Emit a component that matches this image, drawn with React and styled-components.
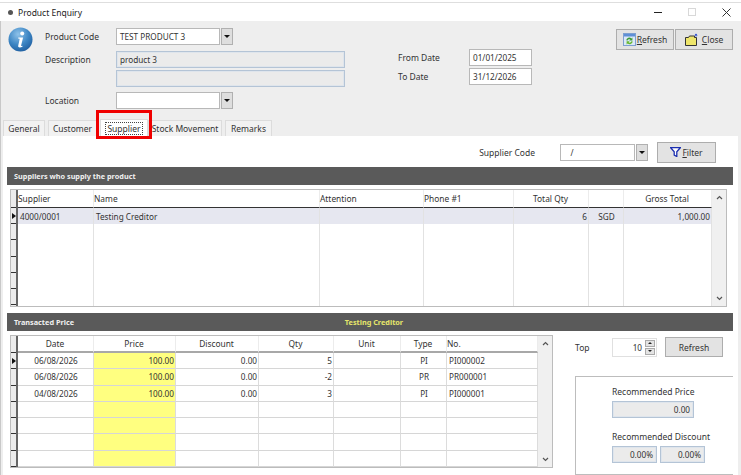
import React from 'react'
import styled, { createGlobalStyle } from 'styled-components'

const GlobalStyle = createGlobalStyle`
  html, body {
    margin: 0;
    padding: 0;
    background: #fff;
  }
  body {
    font-family: 'Noto Sans', 'Open Sans', sans-serif;
    font-size: 8.5px;
    color: #333;
    overflow: hidden;
  }
`

const Window = styled.div`
  width: 741px;
  height: 475px;
  overflow: hidden;
  box-sizing: border-box;
  padding-top: 2px;
  display: flex;
  flex-direction: column;
  background: #fff;
`

const TitleBar = styled.div`
  height: 19px;
  flex: none;
  border-top: 1px solid #dedede;
  box-sizing: border-box;
  display: flex;
  align-items: center;
  padding: 0 10px 0 8px;
  font-size: 8.5px;
  color: #222;
`

const TitleDot = styled.span`
  width: 5px;
  height: 5px;
  border-radius: 50%;
  background: #555;
  margin-right: 5px;
`

const TitleText = styled.span`
  flex: 1;
`

const WinControls = styled.div`
  display: flex;
  align-items: center;
  gap: 25px;
`

const Body = styled.div`
  flex: 1;
  background: #eeeeee;
  border-left: 1px solid #c8c8c8;
  display: flex;
  flex-direction: column;
  min-height: 0;
`

const Header = styled.div`
  height: 98px;
  flex: none;
  display: flex;
`

const InfoBox = styled.div`
  width: 44px;
  flex: none;
  padding: 6px 0 0 7px;
  box-sizing: border-box;
`

const Form = styled.div`
  width: 352px;
  flex: none;
  padding-top: 7px;
  display: flex;
  flex-direction: column;
`

const FormRow = styled.div`
  display: grid;
  grid-template-columns: 71px 1fr;
  align-items: center;
  margin-bottom: ${p => p.$gap || 0}px;
`

const Label = styled.span`
  font-size: 8.5px;
  color: #333;
  white-space: nowrap;
`

const Combo = styled.div`
  display: flex;
  align-items: center;
  gap: 1px;
`

const TextBox = styled.div`
  width: ${p => p.$w}px;
  height: ${p => p.$h || 17}px;
  box-sizing: border-box;
  background: ${p => p.$bg || '#fff'};
  border: 1px solid ${p => p.$line || '#b8b8b8'};
  display: flex;
  align-items: center;
  justify-content: ${p => (p.$right ? 'flex-end' : 'flex-start')};
  padding: 0 3px;
  font-size: 8.2px;
  color: #333;
`

const ReadOnly = styled(TextBox)`
  background: #ebebeb;
  border: 1px solid #b4c4d6;
  box-shadow: inset 0 0 0 1px #dfe5ec;
`

const DropButton = styled.span`
  width: 12px;
  height: 17px;
  box-sizing: border-box;
  background: #dedede;
  border: 1px solid #b0b0b0;
  display: flex;
  align-items: center;
  justify-content: center;
  &::after {
    content: '';
    border-left: 3.5px solid transparent;
    border-right: 3.5px solid transparent;
    border-top: 3.5px solid #111;
  }
`

const DateCol = styled.div`
  width: 219px;
  flex: none;
  padding: 28px 0 0 1px;
  box-sizing: border-box;
  display: flex;
  flex-direction: column;
  gap: 2px;
`

const DateRow = styled.div`
  display: grid;
  grid-template-columns: 71px 63px;
  align-items: center;
`

const ActionCol = styled.div`
  display: flex;
  gap: 1px;
  padding-top: 8px;
`

const Button = styled.button`
  width: ${p => p.$w}px;
  height: ${p => p.$h || 21}px;
  box-sizing: border-box;
  background: #e3e3e3;
  border: 1px solid #adadad;
  font-family: inherit;
  font-size: 8.5px;
  color: #333;
  padding: 0;
  display: flex;
  align-items: center;
  justify-content: center;
  gap: 1px;
  u {
    text-decoration: underline;
  }
`

const TabStrip = styled.div`
  height: 17px;
  flex: none;
  display: flex;
  align-items: flex-end;
  padding-left: 2px;
`

const Tab = styled.div`
  position: relative;
  width: ${p => p.$w}px;
  height: ${p => (p.$active ? 17 : 16)}px;
  box-sizing: border-box;
  background: ${p => (p.$active ? '#fff' : '#f2f2f2')};
  border: 1px solid #dcdcdc;
  border-bottom: none;
  margin-left: ${p => p.$ml || 0}px;
  font-size: 8.5px;
  color: #333;
  display: flex;
  align-items: center;
  justify-content: center;
`

const FocusText = styled.span`
  border: 1px dotted #444;
  padding: 0 1px;
  line-height: 11px;
`

const Highlight = styled.span`
  position: absolute;
  z-index: 2;
  left: -5px;
  right: -5px;
  top: -10px;
  bottom: -3px;
  border: 3px solid #f00000;
  pointer-events: none;
`

const Page = styled.div`
  flex: 1;
  min-height: 0;
  background: #fff;
  margin: 0 3px 0 2px;
  padding: 0 5px 0 4px;
  display: flex;
  flex-direction: column;
`

const FilterRow = styled.div`
  height: 31px;
  flex: none;
  display: flex;
  align-items: center;
  justify-content: flex-end;
  padding: 1px 17px 0 0;
  box-sizing: border-box;
`

const FilterLabel = styled(Label)`
  margin-right: 25px;
`

const FilterCombo = styled(Combo)`
  margin-right: 9px;
`

const SectionBar = styled.div`
  height: 18px;
  flex: none;
  background: #5a5a5a;
  color: #f0f0f0;
  font-size: 7.3px;
  font-weight: 700;
  display: grid;
  grid-template-columns: 1fr auto 1fr;
  align-items: center;
  padding: 0 7px;
`

const SectionNote = styled.span`
  color: #e6e66a;
  margin-left: 8px;
`

const Grid = styled.div`
  position: relative;
  box-sizing: border-box;
  border: 1px solid #bcbcbc;
  background: #fff;
  display: flex;
`

const SupplierGrid = styled(Grid)`
  height: 118px;
  flex: none;
  margin: 4px 6px 6px 3px;
`

const PriceGrid = styled(Grid)`
  width: 543px;
  height: 133px;
`

const Indicators = styled.div`
  width: 7px;
  flex: none;
  box-sizing: border-box;
  background: #ececec;
  border-right: 2px solid #666;
  display: flex;
  flex-direction: column;
`

const IndicatorCell = styled.div`
  height: ${p => p.$h}px;
  flex: none;
  box-sizing: border-box;
  border-bottom: 1px solid #333;
  display: flex;
  align-items: center;
  justify-content: flex-end;
`

const Pointer = styled.span`
  border-top: 3px solid transparent;
  border-bottom: 3px solid transparent;
  border-left: 4px solid #111;
`

const Table = styled.div`
  flex: 1;
  min-width: 0;
  display: grid;
  grid-template-columns: ${p => p.$cols};
  grid-template-rows: ${p => p.$rows};
  height: 100%;
`

const HeadCell = styled.div`
  box-sizing: border-box;
  display: flex;
  align-items: center;
  justify-content: ${p => p.$align || 'flex-start'};
  font-size: 8.4px;
  color: #333;
  border-right: 1px solid #ececec;
  border-bottom: ${p => p.$heavy || '1px solid #333'};
  padding: 0 1px 0 0;
`

const Cell = styled.div`
  box-sizing: border-box;
  display: flex;
  align-items: center;
  justify-content: ${p => p.$align || 'flex-start'};
  font-size: 8.2px;
  color: #333;
  white-space: nowrap;
  padding: 0 1px 0 2px;
  background: ${p => p.$bg || 'transparent'};
  border-right: 1px solid ${p => p.$line || '#e2e2e2'};
  border-bottom: ${p => (p.$rule ? `1px solid ${p.$rule}` : 'none')};
`

const ScrollBar = styled.div`
  width: 14px;
  flex: none;
  background: #f0f0f0;
  display: flex;
  flex-direction: column;
  justify-content: space-between;
  align-items: center;
  padding: 5px 0;
  box-sizing: border-box;
`

const Lower = styled.div`
  flex: 1;
  min-height: 0;
  display: flex;
  padding: 4px 0 0 3px;
`

const SidePanel = styled.div`
  flex: 1;
  display: flex;
  flex-direction: column;
  padding: 2px 0 0 22px;
  min-width: 0;
`

const TopRow = styled.div`
  display: flex;
  align-items: center;
  height: 20px;
`

const TopLabel = styled(Label)`
  width: 37px;
`

const Spinner = styled(TextBox)`
  justify-content: flex-end;
  padding: 0 1px 0 0;
  border: 1px solid #e0e0e0;
  margin-right: 8px;
  gap: 3px;
`

const SpinStack = styled.div`
  display: flex;
  flex-direction: column;
  gap: 1px;
`

const SpinPart = styled.span`
  width: 10px;
  height: 7px;
  background: #e4e4e4;
  border: 1px solid #aaa;
  box-sizing: border-box;
  display: flex;
  align-items: center;
  justify-content: center;
  &::after {
    content: '';
    border-left: 2px solid transparent;
    border-right: 2px solid transparent;
    ${p => (p.$up ? 'border-bottom: 2px solid #222;' : 'border-top: 2px solid #222;')}
  }
`

const GroupBox = styled.div`
  margin-top: 19px;
  height: 120px;
  box-sizing: border-box;
  border: 1px solid #bdbdbd;
  border-right: none;
  padding: 9px 0 0 36px;
  display: flex;
  flex-direction: column;
`

const GroupLabel = styled(Label)`
  line-height: 12px;
  margin-bottom: 3px;
`

const GroupInputs = styled.div`
  display: flex;
  gap: 3px;
  margin-bottom: ${p => p.$gap || 0}px;
`

const InfoIcon = () => (
  <svg width="25" height="25" viewBox="0 0 25 25">
    <defs>
      <radialGradient id="infoFill" cx="40%" cy="28%" r="80%">
        <stop offset="0" stopColor="#8fc3ea" />
        <stop offset="0.55" stopColor="#3d86c4" />
        <stop offset="1" stopColor="#1c5a9c" />
      </radialGradient>
    </defs>
    <circle cx="12.5" cy="12.5" r="12" fill="url(#infoFill)" />
    <circle cx="14.2" cy="6.6" r="2" fill="#fff" />
    <path d="M10.4 10.4h4.7l-2 8.2c-.1.5.3.6 1.5.2l-.2 1c-2 .9-4.6 1.1-4.2-1l1.5-7.1-1.6-.2z" fill="#fff" />
  </svg>
)

const RefreshIcon = () => (
  <svg width="13" height="13" viewBox="0 0 13 13">
    <rect x="0.5" y="0.5" width="12" height="12" fill="#dbe8f6" stroke="#7d9fd0" />
    <rect x="1" y="1" width="11" height="2.5" fill="#5f8fd6" />
    <path d="M3.2 7.2a3.2 3.2 0 0 1 5.2-1.8l1-1v3.2H6.2l1.2-1.1a1.8 1.8 0 0 0-2.8 1z" fill="#3c9a35" />
    <path d="M9.8 8.6a3.2 3.2 0 0 1-5.2 1.8l-1 1V8.2h3.2L5.6 9.3a1.8 1.8 0 0 0 2.8-1z" fill="#66b82c" />
  </svg>
)

const CloseIcon = () => (
  <svg width="14" height="13" viewBox="0 0 14 13">
    <path d="M.5 4.5h3l1-1.5h5v1.5h2v8H.5z" fill="#eee56a" stroke="#333" />
    <path d="M11 3.5V1" stroke="#2f4fd0" strokeWidth="1" fill="none" />
    <path d="M9.3 2.4 11 .4l1.700 2z" fill="#2f4fd0" />
  </svg>
)

const FilterIcon = () => (
  <svg width="11" height="10" viewBox="0 0 11 10">
    <path d="M.5.500h10L6.800 4.800V9.500L4.200 8V4.800z" fill="#fff" stroke="#1c2fb0" strokeWidth="1.300" />
  </svg>
)

const Chevron = ({ up }) => (
  <svg width="7" height="5" viewBox="0 0 7 5">
    <path d={up ? 'M1 4l2.500-2.500L6 4' : 'M1 1l2.500 2.500L6 1'} fill="none" stroke="#555" strokeWidth="1.200" />
  </svg>
)

const supplierCols = '76px 226px 104px 90px 75px 35px 88px'
const supplierHead = [
  ['Supplier'], ['Name'], ['Attention'], ['Phone #1'],
  ['Total Qty', 'center'], [''], ['Gross Total', 'center'],
]
const supplierRow = [
  ['4000/0001'], ['Testing Creditor'], [''], [''],
  ['6', 'flex-end'], ['SGD', 'center'], ['1,000.00', 'flex-end'],
]
const supplierMarks = [18, 16, 16, 17, 16, 16, 16]

const priceCols = '76px 82px 83px 75px 67px 46px 1fr'
const priceHead = [
  ['Date', 'center'], ['Price', 'center'], ['Discount', 'center'], ['Qty', 'center'],
  ['Unit', 'center'], ['Type', 'center'], ['No.'],
]
const priceRows = [
  ['06/08/2026', '100.00', '0.00', '5', '', 'PI', 'PI000002'],
  ['06/08/2026', '100.00', '0.00', '-2', '', 'PR', 'PR000001'],
  ['04/08/2026', '100.00', '0.00', '3', '', 'PI', 'PI000001'],
  ['', '', '', '', '', '', ''],
  ['', '', '', '', '', '', ''],
  ['', '', '', '', '', '', ''],
  ['', '', '', '', '', '', ''],
]
const priceAlign = ['center', 'flex-end', 'flex-end', 'flex-end', 'center', 'center', 'flex-start']

export default function App() {
  return (
    <Window>
      <GlobalStyle />
      <TitleBar>
        <TitleDot />
        <TitleText>Product Enquiry</TitleText>
        <WinControls>
          <svg width="9" height="9" viewBox="0 0 9 9"><path d="M0 4.500h8" stroke="#222" /></svg>
          <svg width="9" height="9" viewBox="0 0 9 9"><rect x=".5" y=".5" width="7" height="7" fill="none" stroke="#d8d8d8" /></svg>
          <svg width="9" height="9" viewBox="0 0 9 9"><path d="M.5.500l8 8M8.500.500l-8 8" stroke="#333" /></svg>
        </WinControls>
      </TitleBar>
      <Body>
        <Header>
          <InfoBox><InfoIcon /></InfoBox>
          <Form>
            <FormRow $gap={6}>
              <Label>Product Code</Label>
              <Combo>
                <TextBox $w={104}>TEST PRODUCT 3</TextBox>
                <DropButton />
              </Combo>
            </FormRow>
            <FormRow $gap={2}>
              <Label>Description</Label>
              <ReadOnly $w={229}>product 3</ReadOnly>
            </FormRow>
            <FormRow $gap={5}>
              <span />
              <ReadOnly $w={229} />
            </FormRow>
            <FormRow>
              <Label>Location</Label>
              <Combo>
                <TextBox $w={104} />
                <DropButton />
              </Combo>
            </FormRow>
          </Form>
          <DateCol>
            <DateRow>
              <Label>From Date</Label>
              <TextBox $w={63}>01/01/2025</TextBox>
            </DateRow>
            <DateRow>
              <Label>To Date</Label>
              <TextBox $w={63}>31/12/2026</TextBox>
            </DateRow>
          </DateCol>
          <ActionCol>
            <Button $w={58}><RefreshIcon /><span><u>R</u>efresh</span></Button>
            <Button $w={58}><CloseIcon /><span>&nbsp;<u>C</u>lose</span></Button>
          </ActionCol>
        </Header>
        <TabStrip>
          <Tab $w={42}>General</Tab>
          <Tab $w={49} $ml={3}>Customer</Tab>
          <Tab $w={48} $ml={3} $active>
            <FocusText>Supplier</FocusText>
            <Highlight />
          </Tab>
          <Tab $w={74}>Stock Movement</Tab>
          <Tab $w={47} $ml={3}>Remarks</Tab>
        </TabStrip>
        <Page>
          <FilterRow>
            <FilterLabel>Supplier Code</FilterLabel>
            <FilterCombo>
              <TextBox $w={75}>&nbsp;&nbsp;&nbsp;/</TextBox>
              <DropButton />
            </FilterCombo>
            <Button $w={59}><FilterIcon /><span><u>F</u>ilter</span></Button>
          </FilterRow>
          <SectionBar><span>Suppliers who supply the product</span></SectionBar>
          <SupplierGrid>
            <Indicators>
              {supplierMarks.map((h, i) => (
                <IndicatorCell key={i} $h={h}>{i === 1 && <Pointer />}</IndicatorCell>
              ))}
            </Indicators>
            <Table $cols={supplierCols} $rows="18px 16px 1fr">
              {supplierHead.map(([text, align], i) => (
                <HeadCell key={i} $align={align}>{text}</HeadCell>
              ))}
              {supplierRow.map(([text, align], i) => (
                <Cell key={i} $bg="#e6e7f0" $align={align}>{text}</Cell>
              ))}
              {supplierRow.map((_, i) => (
                <Cell key={i} />
              ))}
            </Table>
            <ScrollBar><Chevron up /><Chevron /></ScrollBar>
          </SupplierGrid>
          <SectionBar>
            <span>Transacted Price</span>
            <SectionNote>Testing Creditor</SectionNote>
          </SectionBar>
          <Lower>
            <PriceGrid>
              <Indicators>
                <IndicatorCell $h={17} />
                {priceRows.map((_, i) => (
                  <IndicatorCell key={i} $h={114 / 7}>{i === 0 && <Pointer />}</IndicatorCell>
                ))}
              </Indicators>
              <Table $cols={priceCols} $rows="17px repeat(7, 1fr)">
                {priceHead.map(([text, align], i) => (
                  <HeadCell key={i} $align={align} $heavy="2px solid #a8a8a8">{text}</HeadCell>
                ))}
                {priceRows.flatMap((row, r) =>
                  row.map((text, i) => (
                    <Cell
                      key={`${r}-${i}`}
                      $align={priceAlign[i]}
                      $bg={i === 1 ? '#ffff80' : undefined}
                      $rule="#d6d6d6"
                      $line="#dcdcdc"
                    >
                      {text}
                    </Cell>
                  ))
                )}
              </Table>
              <ScrollBar><Chevron up /><Chevron /></ScrollBar>
            </PriceGrid>
            <SidePanel>
              <TopRow>
                <TopLabel>Top</TopLabel>
                <Spinner $w={45} $h={19}>
                  10
                  <SpinStack><SpinPart $up /><SpinPart /></SpinStack>
                </Spinner>
                <Button $w={58} $h={20}>Refresh</Button>
              </TopRow>
              <GroupBox>
                <GroupLabel>Recommended Price</GroupLabel>
                <GroupInputs $gap={13}>
                  <ReadOnly $w={82} $right>0.00</ReadOnly>
                </GroupInputs>
                <GroupLabel>Recommended Discount</GroupLabel>
                <GroupInputs>
                  <ReadOnly $w={45} $right>0.00%</ReadOnly>
                  <ReadOnly $w={45} $right>0.00%</ReadOnly>
                </GroupInputs>
              </GroupBox>
            </SidePanel>
          </Lower>
        </Page>
      </Body>
    </Window>
  )
}
